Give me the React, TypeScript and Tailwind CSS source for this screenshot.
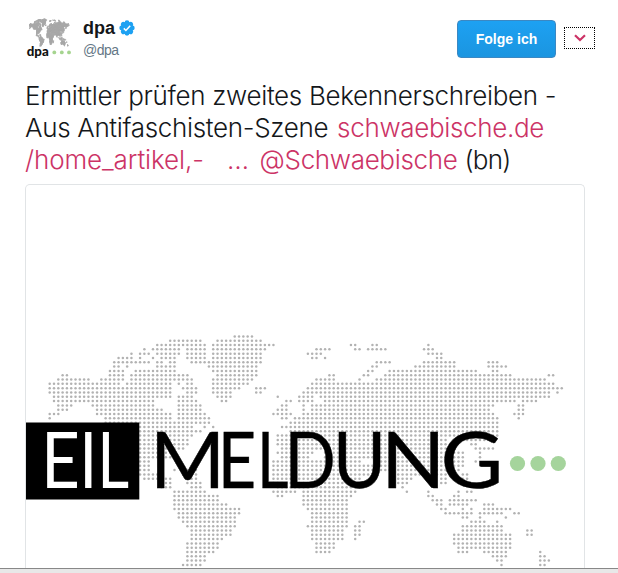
import React from "react";

// Runs of filled columns for every row of the dotted world map.
const ROWS: string[] = [
  "43-47",
  "28-35,39-49",
  "25-36,38-52,70-71,75-76,88",
  "22,24-30,32-36,38-50,62-65,71-72,74-78,87-89",
  "19,21-23,25-30,32-36,38-49,60-63,88-91",
  "16-19,21,24,26-29,32-36,38-49,61-62,64,90-91",
  "15-23,25-26,28-29,33-49,76-79,87-94,102-104",
  "15-16,18,25-29,37-48,75-76,85-94,102-106",
  "14-17,20-29,38-48,74-75,79-99,103-104",
  "3-4,14-17,19-32,39-48,65-66,73-74,78-107,116-117",
  "2-9,12-17,19-33,38-47,62-66,72,76-115",
  "0-16,18-28,30,32-33,38-46,61-117",
  "0-28,31-34,38-44,48-50,60-119",
  "0-28,32-34,38-42,48-49,59-116,118",
  "1-28,30-33,39-42,53,58-61,63-116",
  "1-24,30-34,40-41,55-56,58-61,64-108,110-113",
  "2-5,10-24,30-35,54-55,59,61-103,109-110",
  "2-4,11-26,30-35,53-55,59,61-102,109-110",
  "0-2,11-28,30-36,52-56,59-103,108-110",
  "0,13-28,30-37,54-55,57-104,109",
  "13-37,56-104",
  "21-33,36,38,54-104",
  "21-35,56-104",
  "21-33,53-104",
  "21-32,53-92,95-103",
  "21-32,53-92,98-99",
  "21-31,54-92,99-103",
  "21-29,53-61,64-92,94-96,100",
  "21-29,54-60,64-92,94-96,100",
  "21-23,52-72,76-92,94-96,99",
  "21-23,52-92,94-96",
  "21-23,29,32-34,52-92,94-95",
  "20-25,31-34,52-74,80-92,94,96-97",
  "22-25,27-28,32-34,52-72,80-84,91-92,96-97",
  "26-28,32-35,52-72,81-83,91-92",
  "26-28,33-35,53-72,82",
  "29-36,52-57,59-71,83,88,95,97-98",
  "29-39,53-54,59-70,88-89,94-95",
  "29-39,59-69,89-91,93-99",
  "29-41,59-69,90-91,93-97,101-103",
  "29-44,60-69,91-92,96,98,101-107",
  "30-44,61-69,92-98,100-105,108-109",
  "30-43,61-69,96-97,100,106",
  "31-43,61-69,72-73,98-101,104",
  "32-43,60-69,71-72,96-105",
  "33-42,61-68,71-72,96-105,111-112",
  "33-42,61-68,71-72,94-107,111-112",
  "33-40,61-68,71,94-107",
  "32-39,62-66,94-107",
  "32-39,62-66,95-107",
  "32-38,62-65,95-97,101-106,114",
  "32-36,103-106,114-115",
  "32-36,104-105,114-116",
  "31-35,105,114-115",
];

const DOTS: [number, number][] = ROWS.flatMap((row, r) =>
  row.split(",").flatMap((run) => {
    const [a, b = a] = run.split("-").map(Number);
    return Array.from({ length: b - a + 1 }, (_, i): [number, number] => [a + i, r]);
  }),
);

// Letter, origin and horizontal stretch.
const LETTERS: [string, number, number][] = [
  ["E", 41.1, 0.87],
  ["I", 79.2, 0.83],
  ["L", 97.2, 0.8],
  ["M", 149.7, 1.05],
  ["E", 217.8, 0.86],
  ["L", 257, 0.79],
  ["D", 284.5, 0.87],
  ["U", 332.9, 0.93],
  ["N", 381, 1.09],
  ["G", 440.5, 1.11],
];

function Avatar() {
  return (
    <svg className="h-12 w-12 shrink-0" viewBox="0 0 48 48">
      <g fill="#a8a8a8">
        {DOTS.map(([c, r], i) => (
          <rect key={i} x={4 + c * 0.335} y={3.5 + r * 0.51} width="0.7" height="0.9" />
        ))}
      </g>
      <text x="1.7" y="41" fontSize="14" fontWeight="900" fill="#111" textLength="22" lengthAdjust="spacingAndGlyphs" className="font-['Lato',sans-serif]">
        dpa
      </text>
      <g fill="#a5d48f">
        <circle cx="29.3" cy="37.4" r="1.9" />
        <circle cx="36.8" cy="37.4" r="1.9" />
        <circle cx="44" cy="37.4" r="1.9" />
      </g>
    </svg>
  );
}

function Verified() {
  return (
    <svg className="h-4 w-4" viewBox="0 0 16 16">
      <g fill="#1da1f2">
        <circle cx="8" cy="8" r="6.2" />
        {[0, 45, 90, 135, 180, 225, 270, 315].map((a) => (
          <circle key={a} cx="8" cy="2.7" r="2.4" transform={`rotate(${a} 8 8)`} />
        ))}
      </g>
      <path d="M4.8 8.4l2.1 2.1 4.3-4.8" fill="none" stroke="#fff" strokeWidth="1.5" />
    </svg>
  );
}

function Picture() {
  return (
    <svg className="block h-[384px] w-[558px]" viewBox="26 185 558 384">
      <g fill="#b2b2b2">
        {DOTS.map(([c, r], i) => (
          <circle key={i} cx={49.7 + c * 4.303} cy={336.4 + r * 4.312} r="1.25" />
        ))}
      </g>
      <rect x="26" y="422.5" width="113.3" height="77" fill="#000" />
      {LETTERS.map(([ch, x, s], i) => (
        <text
          key={i}
          transform={`translate(${x} 488.3) scale(${s} 1)`}
          fontSize="77.5"
          fill={i < 3 ? "#fff" : "#000"}
          stroke={i < 3 ? "#fff" : "#000"}
          strokeWidth={i < 3 ? 0 : 0.4}
          className="font-['Lato',sans-serif]"
        >
          {ch}
        </text>
      ))}
      <g fill="#a5d49c">
        <circle cx="517.5" cy="463.5" r="7.6" />
        <circle cx="538" cy="463.5" r="7.6" />
        <circle cx="558.3" cy="463.5" r="7.6" />
      </g>
    </svg>
  );
}

export default function App() {
  return (
    <div className="flex h-[573px] w-[618px] flex-col overflow-hidden bg-white font-['Liberation_Sans',Arial,sans-serif] text-[#14171a]">
      <header className="flex h-[80px] shrink-0 items-start pl-[25px] pr-[23px] pt-[15px]">
        <Avatar />
        <div className="ml-[10px] pt-[2px]">
          <div className="flex items-center gap-1">
            <span className="text-[18px] font-bold leading-[22px]">dpa</span>
            <Verified />
          </div>
          <div className="text-[14px] leading-[22px] tracking-[-0.5px] text-[#657786]">@dpa</div>
        </div>
        <button className="ml-auto mt-[5px] h-[38px] w-[99px] rounded-[4px] border border-[#3b88c3] bg-linear-to-b from-[#1da1f2] to-[#1b95e0] text-[14px] font-bold text-white">
          Folge ich
        </button>
        <button className="ml-[8px] mt-[12px] flex h-[22px] w-[31px] items-center justify-center border border-dotted border-black">
          <svg className="h-[8px] w-[12px]" viewBox="0 0 12 8">
            <path d="M1 1.2l5 4.8 5-4.8" fill="none" stroke="#cc3366" strokeWidth="2.2" />
          </svg>
        </button>
      </header>
      <p className="h-[104px] shrink-0 whitespace-nowrap pl-[25px] font-['Inter',sans-serif] text-[26px] font-light leading-[32px] tracking-[-0.33px]">
        Ermittler prüfen zweites Bekennerschreiben -<br />
        Aus Antifaschisten-Szene <span className="ml-[2px] text-[#cc3366]">schwaebische.de</span>
        <br />
        <span className="tracking-[-0.1px] text-[#cc3366]">/home_artikel,-</span>
        <span className="ml-[23px] text-[#cc3366]">… <span className="ml-[4px]">@Schwaebische</span></span>{" "}
        <span className="tracking-[-0.7px]">(bn)</span>
      </p>
      <div className="ml-[25px] h-[384px] w-[560px] shrink-0 overflow-hidden rounded-t-[5px] border border-b-0 border-[#e1e4e6]">
        <Picture />
      </div>
      <footer className="h-[5px] shrink-0 border-t border-[#888] bg-[#e8e8e8]" />
    </div>
  );
}
